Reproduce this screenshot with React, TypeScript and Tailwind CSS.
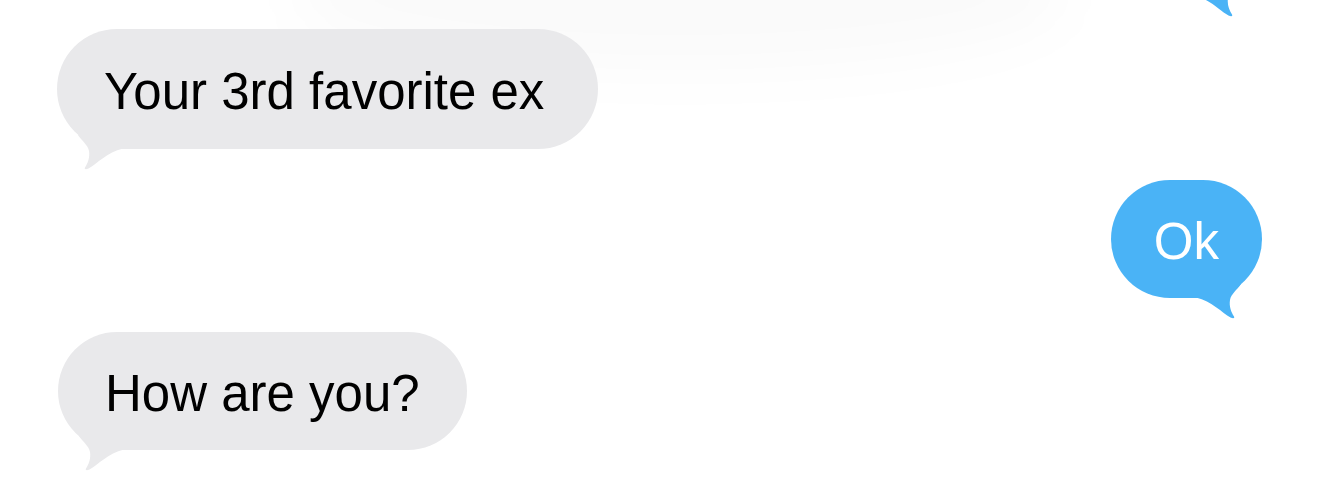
import clsx from "clsx";

function Tail({ color, flip }: { color: string; flip?: boolean }) {
  return (
    <svg
      width="70"
      height="56"
      viewBox="0 0 70 56"
      className={clsx("absolute bottom-[-26px]", flip ? "right-0 -scale-x-100" : "left-0")}
    >
      <path
        d="M21 16 C25 22 31 26 32 32 C33 38 31 44 28 48.5 C27 50.5 29 50.5 31.5 49.5 C40 45 50 33 66 29.5 L66 16 Z"
        fill={color}
      />
    </svg>
  );
}

function Received({ text, className }: { text: string; className?: string }) {
  return (
    <div
      className={clsx(
        "relative flex items-center self-start rounded-full bg-[#e9e9eb] pl-[47px] pt-[4px] text-[51px] text-black",
        className
      )}
    >
      <span>{text}</span>
      <Tail color="#e9e9eb" />
    </div>
  );
}

function Sent({ text, className }: { text: string; className?: string }) {
  return (
    <div
      className={clsx(
        "relative flex items-center self-end rounded-full bg-[#4ab3f6] px-[43px] pt-[4px] text-[51px] text-white",
        className
      )}
    >
      <span>{text}</span>
      <Tail color="#4ab3f6" flip />
    </div>
  );
}

export default function App() {
  return (
    <div className="relative h-[480px] w-[1320px] overflow-hidden bg-white font-['Liberation_Sans',sans-serif] leading-none">
      <div className="pointer-events-none absolute left-[290px] top-[-80px] h-[150px] w-[780px] rounded-[50%] bg-black/[0.02] blur-[28px]" />

      <div className="relative flex flex-col pl-[57px] pr-[58px]">
        <Sent text="" className="mr-[2px] mt-[-104px] h-[100px] w-[220px]" />
        <Received text="Your 3rd favorite ex" className="mt-[33px] h-[120px] pr-[54px]" />
        <Sent text="Ok" className="mt-[31px] h-[118px]" />
        <Received text="How are you?" className="ml-px mt-[34px] h-[118px] pr-[47px]" />
      </div>
    </div>
  );
}
